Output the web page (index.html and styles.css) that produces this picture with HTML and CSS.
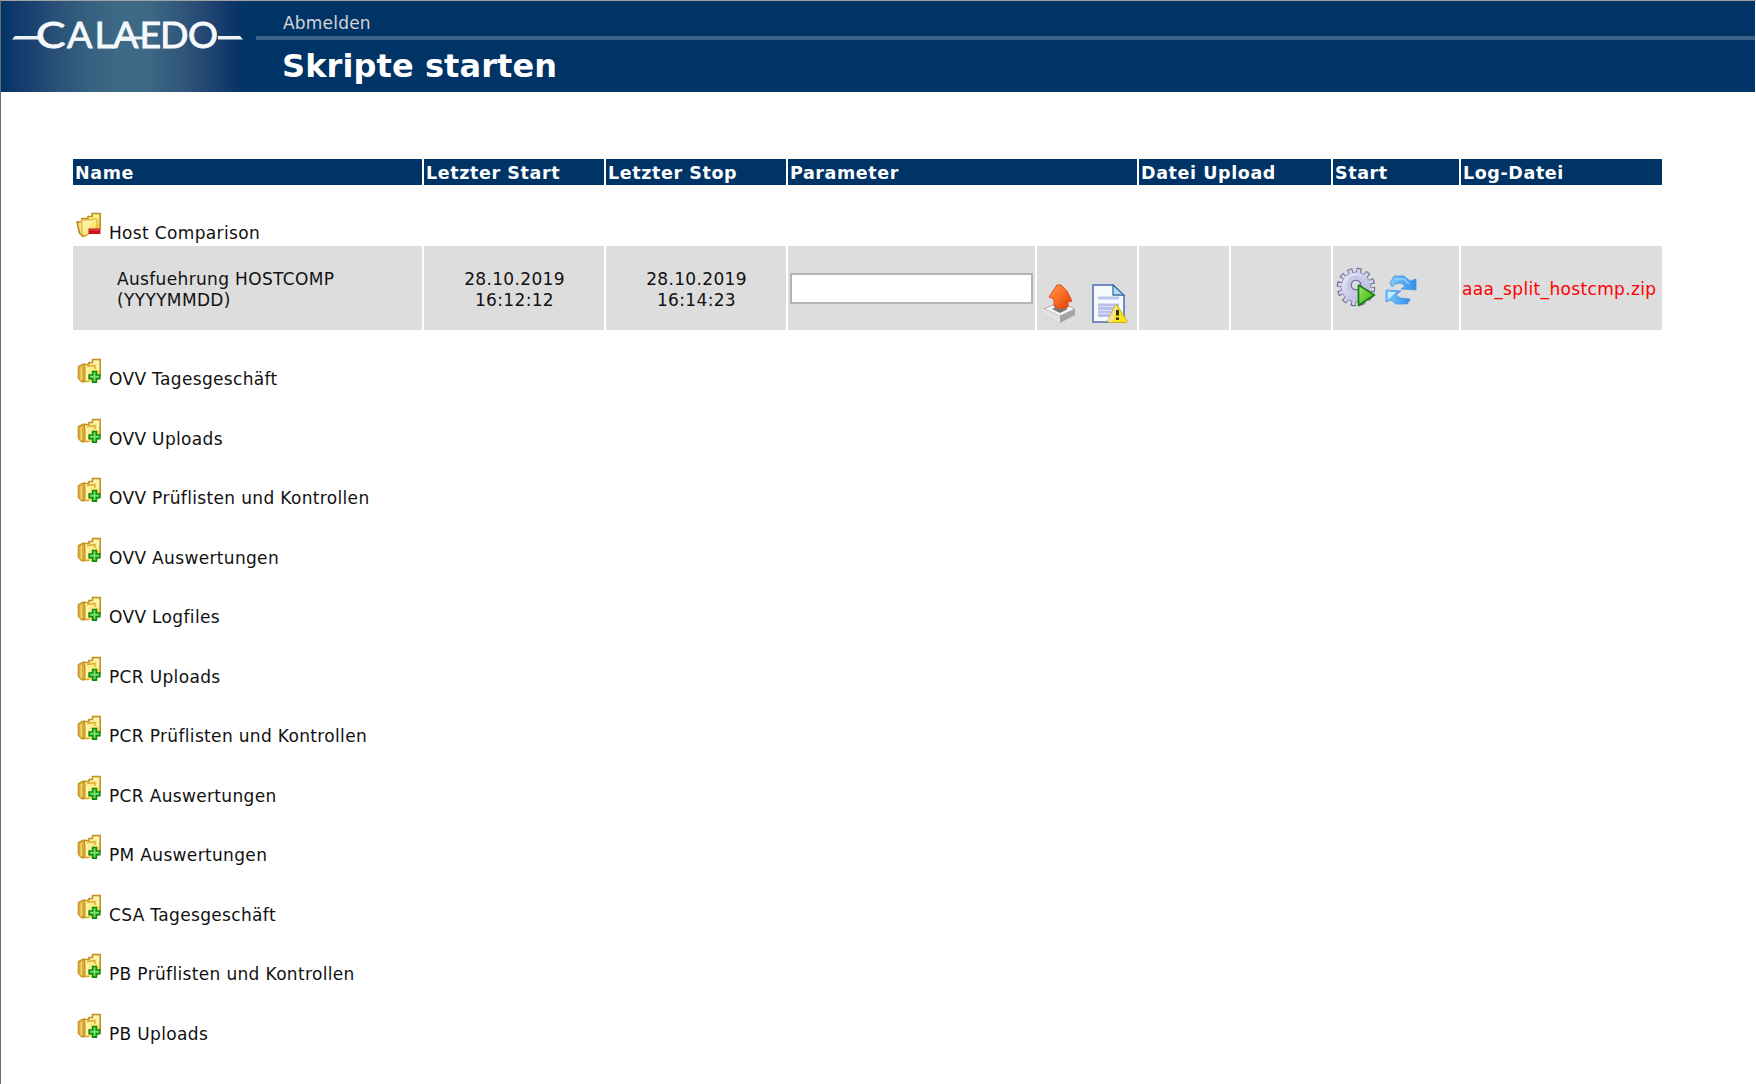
FILE: index.html
```html
<!DOCTYPE html>
<html lang="de">
<head>
<meta charset="utf-8">
<title>Skripte starten</title>
<link rel="stylesheet" href="styles.css">
</head>
<body>
<svg class="defs" width="0" height="0">
  <defs>
    <linearGradient id="gold" x1="0" x2="1" y1="0" y2="1"><stop offset="0" stop-color="#fffbd0"/><stop offset=".6" stop-color="#fbe978"/><stop offset="1" stop-color="#e9bd2c"/></linearGradient>
    <linearGradient id="orange" x1="0" x2="1" y1="0" y2="1"><stop offset="0" stop-color="#ffa04c"/><stop offset=".5" stop-color="#fb6a25"/><stop offset="1" stop-color="#d43a04"/></linearGradient>
    <linearGradient id="green" x1="0" x2="1" y1="0" y2="1"><stop offset="0" stop-color="#a2ea62"/><stop offset="1" stop-color="#2fa60c"/></linearGradient>
    <linearGradient id="lilac" x1="0" x2="1" y1="0" y2="1"><stop offset="0" stop-color="#ececfa"/><stop offset="1" stop-color="#adadd8"/></linearGradient>
    <linearGradient id="sky" x1="0" x2="1" y1="0" y2="0"><stop offset="0" stop-color="#83c9fb"/><stop offset="1" stop-color="#2f8eea"/></linearGradient>
    <symbol id="folder" viewBox="0 0 26 26">
      <path d="M7 7H13V5H17V2H24V20L20 24H8L5 20Z" fill="url(#gold)"/>
      <path d="M7 6.500H13V4.500H16.500V1.500H24.200V18" fill="none" stroke="#c28e1c" stroke-width="1.500"/>
      <path d="M17.500 4.500H22V12" fill="none" stroke="#fff8d2" stroke-width="1.500"/>
      <path d="M7 6L2.200 8.500V20.500L5.500 24H8.500V6Z" fill="#dcab35" stroke="#b8861c"/>
      <path d="M5.200 9V22" stroke="#f7dc80" stroke-width="1.300"/>
      <path d="M9 9V22M11 8.500L19 7.500V11M9 23.500H13" fill="none" stroke="#dca92f" stroke-width="1.300"/>
      <path d="M11 11V22" stroke="#fffbd6" stroke-width="1.500"/>
    </symbol>
    <symbol id="folder-plus" viewBox="0 0 26 26">
      <use href="#folder" width="26" height="26"/>
      <path d="M16.700 13.500H20.300V17H23.800V20.600H20.300V24.200H16.700V20.600H13.200V17H16.700Z" fill="#7be068" stroke="#0b8a12" stroke-width="1.700"/>
    </symbol>
    <symbol id="folder-minus" viewBox="0 0 26 26">
      <path d="M6 6H12V4H16V1H24V20L7 24L4 20Z" fill="url(#gold)"/>
      <path d="M6 9V6.500H12V4.500H16.200V1.500H24.200V17" fill="none" stroke="#c28e1c" stroke-width="1.600"/>
      <path d="M5 10H1L3.500 21L7 24.500L11 23" fill="#fbe37c" stroke="#b88419" stroke-width="1.500"/>
      <path d="M6 8V21L8 24L21 18V8L19 6.500L14 8Z" fill="url(#gold)" stroke="#d8a62c"/>
      <path d="M12.500 16.500H24.500V22H12.500Z" fill="#c8151e"/><path d="M13.500 18H23.500" stroke="#e5534e"/>
    </symbol>
  </defs>
</svg>
<header class="banner">
  <div class="logo">
    <svg width="250" height="90" viewBox="0 0 250 90">
      <text class="logo-text" y="46.500" x="35" textLength="29.500" lengthAdjust="spacingAndGlyphs">C</text>
      <text class="logo-text" y="46.500" x="66 93.500 112 138.500 159 187">ALAEDO</text>
      <path d="M14 35H38V38.500H11ZM217 35H239L242 38.500H217ZM120 35.500H142V38.500H120Z" fill="#eef3f7"/>
    </svg>
  </div>
  <div class="banner-main">
    <nav class="banner-nav"><a class="logout">Abmelden</a></nav>
    <h1 class="title"><span>Skripte starten</span></h1>
  </div>
</header>
<main class="scripts">
  <div class="row head">
    <div>Name</div><div>Letzter Start</div><div>Letzter Stop</div><div class="span2">Parameter</div><div class="span2">Datei Upload</div><div>Start</div><div>Log-Datei</div>
  </div>
  <div class="group first"><svg class="folder"><use href="#folder-minus"/></svg><span>Host Comparison</span></div>
  <div class="row entry">
    <div class="name">Ausfuehrung HOSTCOMP (YYYYMMDD)</div>
    <div class="time">28.10.2019<br>16:12:12</div>
    <div class="time">28.10.2019<br>16:14:23</div>
    <div class="param"><input class="param-input" type="text"></div>
    <div class="tools">
      <svg width="34" height="40" viewBox="0 0 34 40">
        <path d="M1 25L16 18L32 25V31L17 39L1 31Z" fill="#a5a5a5"/>
        <path d="M1 25L16 18L32 25L17 32Z" fill="#f6f6f6" stroke="#aaa"/>
        <path d="M1 25L17 32V39L1 31Z" fill="#e2e2e2"/>
        <path d="M9 25L16 21L25 25L17 29Z" fill="#777"/>
        <path d="M14 1H18L24 7L29 17L25 18V23L18 25L11 22V15L6 13Z" fill="url(#orange)" stroke="#d8511a"/>
      </svg>
      <svg width="36" height="40" viewBox="0 0 36 40">
        <path d="M1 1H21L32 12V38H1Z" fill="#f6faff" stroke="#4a6cb0" stroke-width="1.500"/>
        <path d="M21 1V11H32Z" fill="#b4d9f2" stroke="#3b6ca8" stroke-width="1.300"/>
        <path d="M6 14H27" stroke="#b9c9ec" stroke-width="3"/>
        <path d="M6 21H27M6 24.500H25M6 28H22M6 31.500H20" stroke="#b9c0ec" stroke-width="2.800"/>
        <path d="M25 21L35 37Q35 38.500 33 38.500H17Q15 38.500 16 36L23 22Q24 20 25 21Z" fill="#f7e51c" stroke="#cfae12"/>
        <path d="M24 21L16 36L17 38H21L25 25Z" fill="#f6df98"/>
        <path d="M25.500 26V31.500M25.500 33.500V36" stroke="#3a3206" stroke-width="3"/>
      </svg>
    </div>
    <div></div><div></div>
    <div class="start">
      <svg width="40" height="40" viewBox="0 0 40 40">
        <circle cx="20" cy="20" r="16.500" fill="none" stroke="#62628f" stroke-width="5.500" stroke-dasharray="4.800 3.840"/>
        <circle cx="20" cy="20" r="15" fill="url(#lilac)" stroke="#7a7aa8" stroke-width=".8"/>
        <circle cx="20" cy="20" r="16" fill="none" stroke="#d3d3ee" stroke-width="4.500" stroke-dasharray="3.100 5.278" stroke-dashoffset="-.7"/>
        <circle cx="20" cy="18" r="8" fill="none" stroke="#c6c6e6" stroke-width="3"/>
        <circle cx="20" cy="18" r="4.800" fill="#dddde4" stroke="#77779d" stroke-width="1.500"/>
        <path d="M22.500 18L38.500 28L22.500 38.500Z" fill="url(#green)" stroke="#1b7b13" stroke-width="1.700" stroke-linejoin="round"/>
      </svg>
      <svg width="32" height="32" viewBox="0 0 32 32">
        <path d="M5 9L9 2H19L25 7L31 5V16L16 15L20 12L16 9L10 10L7 13Z" fill="url(#sky)" stroke="#4a93de" stroke-width=".8"/>
        <path d="M25 26L22 30H11L6 26L1 28V16L16 17L11 21L15 24L25 25Z" fill="url(#sky)" stroke="#4a93de" stroke-width=".8"/>
        <path d="M3 18L11 18L6 23L3 25Z" fill="#c5ebff"/><path d="M10 5H19L24 10" stroke="#8bd3ff" fill="none" stroke-width="1.500"/>
      </svg>
    </div>
    <div class="log">aaa_split_hostcmp.zip</div>
  </div>
  <div class="group"><svg class="folder"><use href="#folder-plus"/></svg><span>OVV Tagesgeschäft</span></div>
  <div class="group"><svg class="folder"><use href="#folder-plus"/></svg><span>OVV Uploads</span></div>
  <div class="group"><svg class="folder"><use href="#folder-plus"/></svg><span>OVV Prüflisten und Kontrollen</span></div>
  <div class="group"><svg class="folder"><use href="#folder-plus"/></svg><span>OVV Auswertungen</span></div>
  <div class="group"><svg class="folder"><use href="#folder-plus"/></svg><span>OVV Logfiles</span></div>
  <div class="group"><svg class="folder"><use href="#folder-plus"/></svg><span>PCR Uploads</span></div>
  <div class="group"><svg class="folder"><use href="#folder-plus"/></svg><span>PCR Prüflisten und Kontrollen</span></div>
  <div class="group"><svg class="folder"><use href="#folder-plus"/></svg><span>PCR Auswertungen</span></div>
  <div class="group"><svg class="folder"><use href="#folder-plus"/></svg><span>PM Auswertungen</span></div>
  <div class="group"><svg class="folder"><use href="#folder-plus"/></svg><span>CSA Tagesgeschäft</span></div>
  <div class="group"><svg class="folder"><use href="#folder-plus"/></svg><span>PB Prüflisten und Kontrollen</span></div>
  <div class="group"><svg class="folder"><use href="#folder-plus"/></svg><span>PB Uploads</span></div>
</main>
</body>
</html>
```
FILE: styles.css
```css
* { box-sizing: border-box; }
body {
  margin: 0;
  height: 1084px;
  overflow: hidden;
  border-top: 1px solid #a3a3a6;
  border-left: 1px solid #6c6c6c;
  background: #fff;
  color: #111;
  font: 17px/21px "DejaVu Sans", Verdana, sans-serif;
  letter-spacing: .34px;
}
.defs { position: absolute; }
.banner {
  display: flex;
  height: 91px;
  margin-right: 1px;
  background: #003366;
}
.logo {
  width: 250px;
  margin-right: 5px;
  background: linear-gradient(90deg, #003366 0, #11396a 14px, #2a5078 55px, #36607f 85px, #3e6986 115px, #3e6986 145px, #31577b 180px, #1b4070 215px, #0b3468 235px, #003366 250px);
}
.logo svg { display: block; }
.logo-text {
  font: 400 37.500px Lato, sans-serif;
  letter-spacing: 0;
  fill: #f6f9fb;
  stroke: #f6f9fb;
  stroke-width: .9px;
}
.banner-main { flex: 1; }
.banner-nav {
  height: 39px;
  padding: 12px 0 0 27px;
  border-bottom: 4px solid #386488;
}
.logout { display: block; color: #d5d5d5; letter-spacing: .2px; }
.title {
  margin: 0;
  padding: 8px 0 0 26px;
  color: #fff;
  font: bold 32px/36px "DejaVu Sans", Verdana, sans-serif;
  letter-spacing: .1px;
}
.scripts {
  display: flex;
  flex-direction: column;
  gap: 2px;
  width: 1589px;
  margin: 67px 0 0 72px;
}
.row {
  display: grid;
  grid-template-columns: 349px 180px 180px 247px 100px 90px 100px 126px 201px;
  gap: 2px;
}
.row > div { background: #ddd; }
.head { height: 26px; }
.head > div {
  padding: 4px 0 0 2px;
  background: #003366;
  color: #fff;
  font-weight: bold;
  font-size: 17.500px;
  letter-spacing: .6px;
  white-space: nowrap;
}
.row > .span2 { grid-column: span 2; }
.entry { height: 84px; }
.entry > div { display: flex; align-items: center; }
.entry .name { padding: 3px 70px 0 44px; }
.entry .time { justify-content: center; padding: 3px 0 0 1px; text-align: center; }
.entry .param { padding: 0 2px; }
.param-input {
  width: 100%;
  height: 31px;
  border: 2px solid #b4b4b4;
  background: #fff;
}
.entry .tools { align-items: flex-start; padding: 38px 0 0 6px; gap: 15px; }
.entry .start { align-items: flex-start; padding: 21px 0 0 3px; gap: 9px; }
.start svg + svg { margin-top: 7px; }
.entry .log { padding: 3px 0 0 1px; color: #f00; }
.group {
  display: flex;
  align-items: flex-end;
  flex: none;
  height: 57.500px;
  padding-left: 3px;
}
.group.first { height: 57px; }
.entry + .group { height: 58px; }
.folder { width: 26px; height: 26px; margin: 0 7px 6px 0; }
```
